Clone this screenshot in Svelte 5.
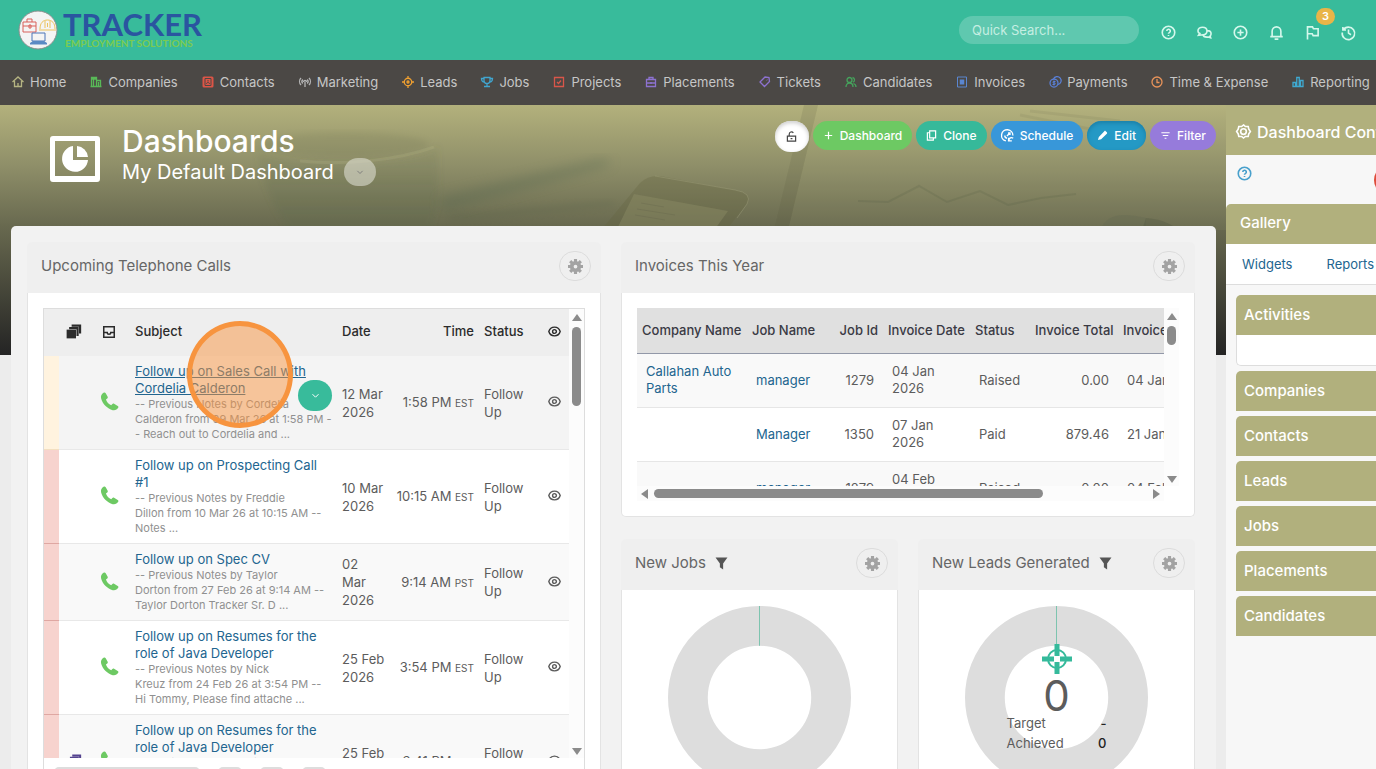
<script>
    const ring = (cx, cy, r) =>
        `M${cx - r} ${cy}a${r} ${r} 0 1 0 ${2 * r} 0a${r} ${r} 0 1 0 ${-2 * r} 0`;

    // 24x24 stroked icons
    const icons = {
        help: ring(12, 12, 10) + "M9.3 9.6a2.8 2.8 0 1 1 4 2.6c-.9.4-1.3.9-1.3 1.8M12 16v1.6",
        chat: "M4.500 13.500L2.500 16.500l4-.5c6 0 9.500-2.500 9.500-6.500 0-3.500-3-6-7-6s-7.500 2.500-7.500 6c0 1.600.8 3 3 4zM16.500 9c3.500 0 6 2 6 5 0 1.600-.6 2.700-1.500 3.600l.8 2.900-3.300-1.200c-5 .7-8.500-.8-9-4.300",
        plusCircle: ring(12, 12, 10) + "M12 7v10M7 12h10",
        bell: "M5 18v-8a7 7 0 0 1 14 0v8M2 18.500h20M9 22.500h6",
        flag: "M4 23V3h8l1.500 3H21v11h-8l-1.500-3H4",
        history: "M3 3v5h5M3.500 8A10 10 0 1 1 2 12M12 7v6l4 2.500",
        home: "M1 12L12 2l11 10M5 10v11h14V10M12 14v7",
        companies: "M1 21h22M3 21V3h10v18M13 9h8v12M7 6v15M17 12v9M3 6h10",
        marketing: "M12 12v10M9 12a3 3 0 1 1 6 0M4 4a10 10 0 0 0 0 14M20 4a10 10 0 0 1 0 14M7.500 7a6 6 0 0 0 0 8M16.500 7a6 6 0 0 1 0 8",
        leads: ring(12, 12, 7.5) + ring(12, 12, 2) + "M12 0v5M12 19v5M0 12h5M19 12h5",
        jobs: "M6 3h12v6a6 6 0 0 1-12 0zM6 5H1c0 5 2 7 6 7M18 5h5c0 5-2 7-6 7M12 15v5M6 21h12",
        projects: "M3 3h18v18H3zM8 12l3 3 5-6",
        placements: "M3 7h18v14H3zM8 7V3h8v4M3 14h18M12 12v4",
        tickets: "M12 2l8 1 1 8-10 10-9-9zM15.500 7.500l1 1",
        candidates: ring(9, 8, 5) + "M2 22c0-5 3-8 7-8s7 3 7 8M15 3a5 5 0 0 1 1 9.500M17 15c3 1 5 3 5 7",
        time: ring(12, 12, 10) + "M12 6v7h5",
        reporting: "M2 13h5v8H2zM9.500 3h5v18h-5zM17 9h5v12h-5zM1 21h22",
        unlock: "M3 11h18v11H3zM7 11V7a5 5 0 0 1 9-3M10 16.500h4",
        plus: "M12 4v16M4 12h16",
        clone: "M8 2h13v15H8zM8 6H3v16h13v-5",
        schedule: "M9 22A10.500 10.500 0 1 1 22 12M16 8l-5 5M13 7.500h3.500V11M7 12a5 5 0 0 0 4 5M14 16v6h6M14.500 21a5 5 0 0 1 8-4",
        filterLines: "M3 6h18M6 12h12M10 18h4",
        down: "M4 8.500l8 8 8-8",
        inbox: "M3 3h18v18H3zM3 13h6a3 3 0 0 0 6 0h6",
        eye: "M1.500 12C3 7 7 4 12 4s9 3 10.500 8c-1.500 5-5.500 8-10.500 8S3 17 1.500 12z" + ring(12, 12, 3.5),
        cog: "M12 1.500l3 2.500h4.500l1 4.200L23 12l-2.500 3.800-1 4.200H15l-3 2.500L9 20H4.500l-1-4.200L1 12l2.500-3.800 1-4.200H9z" + ring(12, 12, 4.5),
    };

    const topIcons = ["help", "chat", "plusCircle", "bell", "flag", "history"];

    const menu = [
        { label: "Home", icon: "home", color: "#b5b482" },
        { label: "Companies", icon: "companies", color: "#58b957" },
        { label: "Contacts", icon: "contacts", color: "#dc5547" },
        { label: "Marketing", icon: "marketing", color: "#b4b4b4" },
        { label: "Leads", icon: "leads", color: "#f0a030" },
        { label: "Jobs", icon: "jobs", color: "#41a5cf" },
        { label: "Projects", icon: "projects", color: "#d9564a" },
        { label: "Placements", icon: "placements", color: "#8d72d0" },
        { label: "Tickets", icon: "tickets", color: "#8d72d0" },
        { label: "Candidates", icon: "candidates", color: "#45a35c" },
        { label: "Invoices", icon: "invoices", color: "#5a86d0" },
        { label: "Payments", icon: "payments", color: "#5a80d8" },
        { label: "Time & Expense", icon: "time", color: "#e8935a" },
        { label: "Reporting", icon: "reporting", color: "#3fa9d0" },
    ];

    const heroActions = [
        { label: "Dashboard", icon: "plus", kind: "green" },
        { label: "Clone", icon: "clone", kind: "teal" },
        { label: "Schedule", icon: "schedule", kind: "blue" },
        { label: "Edit", icon: "pencil", kind: "edit" },
        { label: "Filter", icon: "filterLines", kind: "purple" },
    ];

    const calls = [
        {
            subject: ["Follow up on Sales Call with", "Cordelia Calderon"],
            notes: ["-- Previous Notes by Cordelia", "Calderon from 09 Mar 26 at 1:58 PM -", "- Reach out to Cordelia and ..."],
            date: ["12 Mar", "2026"],
            time: "1:58 PM",
            zone: "EST",
            active: true,
        },
        {
            subject: ["Follow up on Prospecting Call", "#1"],
            notes: ["-- Previous Notes by Freddie", "Dillon from 10 Mar 26 at 10:15 AM --", "Notes ..."],
            date: ["10 Mar", "2026"],
            time: "10:15 AM",
            zone: "EST",
        },
        {
            subject: ["Follow up on Spec CV"],
            notes: ["-- Previous Notes by Taylor", "Dorton from 27 Feb 26 at 9:14 AM --", "Taylor Dorton Tracker Sr. D ..."],
            date: ["02", "Mar", "2026"],
            time: "9:14 AM",
            zone: "PST",
        },
        {
            subject: ["Follow up on Resumes for the", "role of Java Developer"],
            notes: ["-- Previous Notes by Nick", "Kreuz from 24 Feb 26 at 3:54 PM --", "Hi Tommy, Please find attache ..."],
            date: ["25 Feb", "2026"],
            time: "3:54 PM",
            zone: "EST",
        },
        {
            subject: ["Follow up on Resumes for the", "role of Java Developer"],
            notes: ["-- Previous Notes by Nick", "Kreuz from 24 Feb 26 at 3:41 PM --", "Hi Tommy, Please find attache ..."],
            date: ["25 Feb", "2026"],
            time: "3:41 PM",
            zone: "EST",
            copies: true,
        },
    ];

    const invoices = [
        { company: "Callahan Auto Parts", job: "manager", id: 1279, date: ["04 Jan", "2026"], status: "Raised", total: "0.00", due: "04 Jan 2026" },
        { company: "", job: "Manager", id: 1350, date: ["07 Jan", "2026"], status: "Paid", total: "879.46", due: "21 Jan 2026" },
        { company: "", job: "manager", id: 1279, date: ["04 Feb", "2026"], status: "Raised", total: "0.00", due: "04 Feb 2026" },
    ];

    const gallery = ["Companies", "Contacts", "Leads", "Jobs", "Placements", "Candidates"];

    let search = $state("");
</script>

{#snippet icon(name, size = 14)}
    <svg class="icon" width={size} height={size} viewBox="0 0 24 24" aria-hidden="true">
        {#if name === "contacts"}
            <rect x="1" y="1" width="22" height="22" rx="3" fill="currentColor" />
            <path d="M6 5h12v14H6zM12 8v3M9 16c0-4 6-4 6 0" fill="none" stroke="#4a4845" stroke-width="2" />
        {:else if name === "invoices"}
            <path d="M3 2h18v20H3z" fill="none" stroke="currentColor" stroke-width="2" />
            <path d="M7.500 7h9v10h-9z" fill="currentColor" />
        {:else if name === "payments"}
            <path d="M9 6a8 8 0 1 1 9 11" fill="none" stroke="currentColor" stroke-width="2.500" />
            <circle cx="10" cy="14" r="8" fill="none" stroke="currentColor" stroke-width="2.500" />
            <path d="M13 11H9.500a1.500 1.500 0 0 0 0 3h1.500a1.500 1.500 0 0 1 0 3H7M10 9v10" fill="none" stroke="currentColor" stroke-width="2" />
        {:else if name === "pencil"}
            <path d="M2 22l2-7L16 2.500c1-1 2-1 3 0L21.500 5c1 1 1 2 0 3L9 20z" fill="currentColor" />
        {:else if name === "gear"}
            <circle cx="12" cy="12" r="6" fill="none" stroke="currentColor" stroke-width="6" />
            <path d="M12 0v6M12 18v6M0 12h6M18 12h6M3.500 3.500L8 8M16 16l4.500 4.500M3.500 20.500L8 16M16 8l4.500-4.500" stroke="currentColor" stroke-width="5" />
        {:else if name === "phone"}
            <path d="M4.500 1C2 2.500.500 5 1.500 8.500c2 7 8 12.500 14.500 14.500 3 .7 5.500-.5 7-3 .5-1 .2-1.800-.6-2.300l-4.600-2.900c-.8-.5-1.600-.3-2.200.4l-1.400 1.500C11 15.500 8.500 12.500 7.500 9.500l1.700-1.200c.7-.6.900-1.300.5-2.200L7.200 1.600C6.700.7 5.500.4 4.500 1z" fill="currentColor" />
        {:else if name === "copies"}
            <path d="M1 9h15v14H1z" fill="currentColor" />
            <path d="M5 6.500h13.500V19M9 2.500h13.500V15" fill="none" stroke="currentColor" stroke-width="3.500" />
        {:else if name === "funnel"}
            <path d="M1 1h22l-8 11v11l-6-4v-7z" fill="currentColor" />
        {:else}
            <path d={icons[name]} fill="none" stroke="currentColor" stroke-width="2.600" />
        {/if}
    </svg>
{/snippet}

{#snippet cardHead(title, filtered = false)}
    <div class="card-head">
        <h2>{title}</h2>
        {#if filtered}
            <span class="funnel">{@render icon("funnel", 13)}</span>
        {/if}
        <button class="gear" type="button" aria-label="{title} settings">
            {@render icon("gear", 15)}
        </button>
    </div>
{/snippet}

{#snippet donut()}
    <svg class="donut" viewBox="0 0 184 184" aria-hidden="true">
        <circle cx="92" cy="92" r="72" fill="none" stroke="#ddd" stroke-width="40" />
        <path d="M92 0v40" stroke="#7cc4ae" />
    </svg>
{/snippet}

<div class="page">
    <header class="topbar">
        <a class="logo" href="#home" aria-label="Tracker Employment Solutions">
            <svg width="40" height="40" viewBox="0 0 40 40" aria-hidden="true">
                <circle cx="20" cy="20" r="19" fill="#f4f4f4" stroke="#8a8f8d" />
                <g fill="none" stroke-width="1">
                    <path d="M5 12h13v10H5zM5 16h13M9 12V9h5v3M11 15h2v3h-2z" stroke="#d9605a" />
                    <path d="M21 20h17M22 19c0-6 3-9 7.500-9s7.500 3 7.500 9M27 18v-7M32 18v-7M29.500 17v-4" stroke="#ecc25c" />
                    <path d="M14 23h13v8H14z" stroke="#4a74b8" />
                </g>
                <path d="M12 33l3-2h11l3 2v1.500H12z" fill="#5c8ac4" />
            </svg>
            <span class="wordmark">
                <span class="brand">TRACKER</span>
                <span class="tagline">EMPLOYMENT SOLUTIONS</span>
            </span>
        </a>
        <input class="search" type="text" placeholder="Quick Search..." aria-label="Quick Search" bind:value={search} />
        <div class="top-icons">
            {#each topIcons as name}
                <button type="button" aria-label={name}>
                    {@render icon(name, 15)}
                    {#if name === "flag"}
                        <span class="badge">3</span>
                    {/if}
                </button>
            {/each}
        </div>
    </header>

    <nav class="menu">
        {#each menu as item}
            <a href="#{item.icon}">
                <span class="menu-icon" style="color: {item.color}">{@render icon(item.icon, 12)}</span>
                {item.label}
            </a>
        {/each}
    </nav>

    <div class="workspace">
        <main>
            <!-- desk scene behind the heading -->
            <svg class="scene" viewBox="0 0 1226 250" preserveAspectRatio="xMidYMin slice" aria-hidden="true">
                <defs>
                    <filter id="soft"><feGaussianBlur stdDeviation="3" /></filter>
                    <filter id="blurry"><feGaussianBlur stdDeviation="6" /></filter>
                    <linearGradient id="cup" x1="0" y1="0" x2="0" y2="1">
                        <stop offset="0" stop-color="#5f6b4c" stop-opacity="0.1" />
                        <stop offset="1" stop-color="#5f6b4c" stop-opacity="0.3" />
                    </linearGradient>
                </defs>
                <path d="M257 44c10 20 170 20 181-4v60l-8 25H290c-18-20-28-50-33-81z" fill="url(#cup)" filter="url(#soft)" />
                <ellipse cx="345" cy="40" rx="84" ry="13" fill="#626748" opacity="0.15" filter="url(#soft)" />
                <path d="M300 56c50 5 100-2 134-14" fill="none" stroke="#c6c69a" stroke-width="3" opacity="0.15" />
                <path d="M440 92L600 54l14 3-12 6-160 44z" fill="#55664f" opacity="0.35" filter="url(#blurry)" />
                <path d="M450 110l160-14 6 5-166 16z" fill="#55604a" opacity="0.2" filter="url(#soft)" />
                <path d="M602 124l38-46q8-8 20-7l75 14q18 3 12 14l-20 25z" fill="#62623f" opacity="0.3" />
                <path d="M655 71l80 14q18 3 12 14l-10 14" fill="none" stroke="#b0b08a" opacity="0.3" />
                <path d="M617 124l17-35 94 17-13 18z" fill="#94946c" opacity="0.35" />
                <path d="M641 98l23 4M637 104l38 6M635 110l30 5" stroke="#62624a" opacity="0.3" />
                <path d="M818 0h408v125H788z" fill="#b9ba8e" opacity="0.08" />
                <path d="M804 0h14l-30 125h-14z" fill="#54563c" opacity="0.15" />
                <path d="M1020 10l80 16M1030 6l90 10" stroke="#5e6044" stroke-width="3" opacity="0.1" />
                <g fill="none" stroke="#4c5540" opacity="0.16">
                    <path d="M858 96l30 1 31-16 28 16 33-11 28 14 33-7 35-4" stroke-width="2" />
                </g>
                <path d="M1100 125c6-16 22-18 46-12v12z" fill="#59624e" opacity="0.2" />
                <path d="M1146 113c18 1 28 8 32 12h-36z" fill="#3e4739" opacity="0.2" />
            </svg>

            <section class="hero">
                <svg class="hero-icon" width="52" height="48" viewBox="0 0 52 48" aria-hidden="true">
                    <path d="M4 1h44a3 3 0 0 1 3 3v40a3 3 0 0 1-3 3H4a3 3 0 0 1-3-3V4a3 3 0 0 1 3-3zm2 5v35h40V6z" fill="#fff" fill-rule="evenodd" />
                    <path d="M24 11v14h15a13 13 0 1 1-15-14z" fill="#fff" />
                    <path d="M28 11a12 12 0 0 1 11 11H28z" fill="#fff" />
                </svg>
                <div class="heading">
                    <h1>Dashboards</h1>
                    <div class="subtitle">
                        My Default Dashboard
                        <button type="button" aria-label="Switch dashboard">{@render icon("down", 8)}</button>
                    </div>
                </div>
                <div class="actions">
                    <button class="lock" type="button" aria-label="Unlock">{@render icon("unlock", 11)}</button>
                    {#each heroActions as action}
                        <button class={action.kind} type="button">
                            {@render icon(action.icon, action.icon === "schedule" ? 13 : 11)}
                            {action.label}
                        </button>
                    {/each}
                </div>
            </section>

            <section class="board">
                <article class="card calls">
                    {@render cardHead("Upcoming Telephone Calls")}
                    <div class="card-body">
                        <div class="frame">
                            <div class="calls-view">
                                <table>
                                    <colgroup>
                                        <col class="c-strip" /><col class="c-copy" /><col class="c-type" /><col />
                                        <col class="c-date" /><col class="c-time" /><col class="c-status" /><col class="c-eye" />
                                    </colgroup>
                                    <thead>
                                        <tr>
                                            <th></th>
                                            <th class="mid">{@render icon("copies", 15)}</th>
                                            <th class="mid">{@render icon("inbox", 14)}</th>
                                            <th>Subject</th>
                                            <th>Date</th>
                                            <th class="num">Time</th>
                                            <th>Status</th>
                                            <th class="mid">{@render icon("eye", 13)}</th>
                                        </tr>
                                    </thead>
                                    <tbody>
                                        {#each calls as call}
                                            <tr class:active={call.active}>
                                                <td class="strip"></td>
                                                <td class="mid copies">
                                                    {#if call.copies}{@render icon("copies", 14)}{/if}
                                                </td>
                                                <td class="mid phone">{@render icon("phone", 19)}</td>
                                                <td>
                                                    <div class="subject">
                                                        <a href="#call">
                                                            {#each call.subject as line}<span>{line}</span>{/each}
                                                        </a>
                                                        <div class="notes">
                                                            {#each call.notes as line}<span>{line}</span>{/each}
                                                        </div>
                                                        {#if call.active}
                                                            <button class="row-menu" type="button" aria-label="Row actions">
                                                                {@render icon("down", 9)}
                                                            </button>
                                                        {/if}
                                                    </div>
                                                </td>
                                                <td class="lines">{#each call.date as line}<span>{line}</span>{/each}</td>
                                                <td class="num">{call.time} <small>{call.zone}</small></td>
                                                <td class="lines"><span>Follow</span><span>Up</span></td>
                                                <td class="mid">{@render icon("eye", 13)}</td>
                                            </tr>
                                        {/each}
                                    </tbody>
                                </table>
                                <div class="scroll-y">
                                    <i class="arrow up"></i>
                                    <i class="thumb long"></i>
                                    <i class="arrow dn"></i>
                                </div>
                            </div>
                            <div class="pager"><i class="wide"></i><i></i><i></i><i></i></div>
                        </div>
                    </div>
                </article>

                <div class="stack">
                    <article class="card">
                        {@render cardHead("Invoices This Year")}
                        <div class="card-body">
                            <div class="invoice-grid">
                                <div class="invoice-view">
                                    <table>
                                        <colgroup>
                                            <col class="i-company" /><col class="i-job" /><col class="i-id" /><col class="i-date" />
                                            <col class="i-status" /><col class="i-total" /><col class="i-company" />
                                        </colgroup>
                                        <thead>
                                            <tr>
                                                <th>Company Name</th>
                                                <th>Job Name</th>
                                                <th class="num">Job Id</th>
                                                <th>Invoice Date</th>
                                                <th>Status</th>
                                                <th class="num">Invoice Total</th>
                                                <th>Invoice Due</th>
                                            </tr>
                                        </thead>
                                        <tbody>
                                            {#each invoices as invoice}
                                                <tr>
                                                    <td><a href="#company">{invoice.company}</a></td>
                                                    <td><a href="#job">{invoice.job}</a></td>
                                                    <td class="num">{invoice.id}</td>
                                                    <td class="lines">{#each invoice.date as line}<span>{line}</span>{/each}</td>
                                                    <td>{invoice.status}</td>
                                                    <td class="num">{invoice.total}</td>
                                                    <td class="nowrap">{invoice.due}</td>
                                                </tr>
                                            {/each}
                                        </tbody>
                                    </table>
                                </div>
                                <div class="scroll-y">
                                    <i class="arrow up"></i>
                                    <i class="thumb short"></i>
                                    <i class="arrow dn"></i>
                                </div>
                                <div class="scroll-x">
                                    <i class="arrow lt"></i>
                                    <span class="track"><i class="thumb"></i></span>
                                    <i class="arrow rt"></i>
                                </div>
                            </div>
                        </div>
                    </article>

                    <div class="pair">
                        <article class="card">
                            {@render cardHead("New Jobs", true)}
                            <div class="card-body chart">
                                {@render donut()}
                            </div>
                        </article>
                        <article class="card">
                            {@render cardHead("New Leads Generated", true)}
                            <div class="card-body chart">
                                {@render donut()}
                                <div class="gauge">
                                    <svg width="30" height="30" viewBox="0 0 30 30" aria-hidden="true">
                                        <circle cx="15" cy="15" r="9" fill="none" stroke="#35ba9b" stroke-width="2" />
                                        <path d="M15 0v12M15 18v12M0 15h12M18 15h12" stroke="#35ba9b" stroke-width="5" />
                                    </svg>
                                    <strong>0</strong>
                                    <dl>
                                        <dt>Target</dt><dd>-</dd>
                                        <dt>Achieved</dt><dd>0</dd>
                                    </dl>
                                </div>
                            </div>
                        </article>
                    </div>
                </div>
            </section>

            <div class="pointer"></div>
        </main>

        <aside>
            <div class="side-title">{@render icon("cog", 15)} Dashboard Controls</div>
            <div class="side-tools">
                <button class="side-help" type="button" aria-label="Help">{@render icon("help", 15)}</button>
                <button class="side-close" type="button" aria-label="Close"></button>
            </div>
            <h3 class="side-head">Gallery</h3>
            <div class="tabs">
                <a href="#widgets">Widgets</a>
                <a href="#reports">Reports</a>
            </div>
            <div class="sections">
                <div>
                    <button class="section" type="button">Activities</button>
                    <div class="section-body"></div>
                </div>
                {#each gallery as name}
                    <button class="section" type="button">{name}</button>
                {/each}
            </div>
        </aside>
    </div>
</div>

<style>
    :global(body) {
        margin: 0;
        font-family: Inter, "Liberation Sans", sans-serif;
        font-size: 13px;
        color: #5c5c5c;
    }

    .page {
        display: flex;
        flex-direction: column;
        height: 100vh;
        overflow: hidden;
    }

    .page :global(*) {
        box-sizing: border-box;
    }

    button {
        display: flex;
        align-items: center;
        justify-content: center;
        padding: 0;
        border: 0;
        background: none;
        font: inherit;
        color: inherit;
        cursor: pointer;
    }

    a {
        color: #22658f;
        text-decoration: none;
    }

    h1,
    h2,
    h3,
    dl,
    dd {
        margin: 0;
        font-weight: 400;
    }

    .icon {
        display: block;
        flex: none;
        overflow: visible;
    }

    .topbar {
        display: flex;
        align-items: center;
        flex: none;
        height: 60px;
        padding: 0 10px 0 18px;
        background: #38bb9b;
    }

    .logo {
        display: flex;
        align-items: center;
        gap: 5px;
        margin-right: auto;
    }

    .wordmark {
        display: flex;
        flex-direction: column;
        padding-bottom: 2px;
        font-family: Lato, sans-serif;
    }

    .brand {
        font-size: 31px;
        line-height: 28px;
        font-weight: 700;
        color: #2a55a0;
    }

    .tagline {
        padding-left: 2px;
        font-size: 10px;
        line-height: 10px;
        font-weight: 700;
        color: #7ccb50;
    }

    .search {
        width: 180px;
        height: 28px;
        margin-right: 11px;
        padding: 0 13px;
        border: 0;
        border-radius: 14px;
        background: rgba(255, 255, 255, 0.2);
        font: inherit;
        color: #fff;
    }

    .search::placeholder {
        color: #c5eee2;
    }

    .top-icons {
        display: flex;
        padding-top: 4px;
        color: #d5f8ec;
    }

    .top-icons button {
        position: relative;
        width: 36px;
        height: 28px;
    }

    .badge {
        position: absolute;
        top: -10px;
        right: -5px;
        width: 19px;
        height: 17px;
        border-radius: 9px;
        background: #e9b548;
        font-size: 11px;
        line-height: 17px;
        font-weight: 600;
        color: #fff;
    }

    .menu {
        display: flex;
        align-items: center;
        justify-content: space-between;
        flex: none;
        height: 45px;
        padding: 0 6px 2px 12px;
        background: #4b4845;
    }

    .menu a {
        display: flex;
        align-items: center;
        gap: 6px;
        color: #c6c6c6;
        white-space: nowrap;
    }

    .workspace {
        display: flex;
        flex: 1;
        min-height: 0;
    }

    main {
        position: relative;
        display: flex;
        flex-direction: column;
        flex: 1;
        min-width: 0;
        padding: 0 10px 0 11px;
        overflow: hidden;
        background: linear-gradient(#b3b17c, #8f8f69 60px, #68694f 121px, #242424 250px) no-repeat top / 100% 250px #ececec;
    }

    .scene {
        position: absolute;
        top: 0;
        left: 0;
        width: 100%;
        height: 250px;
    }

    .hero {
        position: relative;
        display: flex;
        flex: none;
        height: 121px;
        padding-left: 38px;
        color: #fff;
    }

    .hero-icon {
        margin: 30px 21px 0 0;
    }

    h1 {
        margin-top: 19px;
        font-size: 30px;
        line-height: 34px;
        font-weight: 500;
    }

    .subtitle {
        display: flex;
        align-items: center;
        gap: 10px;
        font-size: 20px;
        line-height: 28px;
    }

    .subtitle button {
        width: 32px;
        height: 28px;
        border-radius: 14px;
        background: rgba(230, 230, 220, 0.55);
        color: #777;
    }

    .actions {
        display: flex;
        align-items: flex-start;
        gap: 4px;
        margin: 16px 0 0 auto;
    }

    .actions button {
        gap: 6px;
        height: 29px;
        padding: 0 10px 1px;
        border-radius: 15px;
        font-size: 12px;
        font-weight: 500;
    }

    .actions .lock {
        width: 34px;
        height: 31px;
        padding: 0;
        border-radius: 16px;
        background: #fff;
        box-shadow: inset 0 2px 4px #ccc;
        color: #444;
    }

    .actions .green {
        background: #6dc963;
    }

    .actions .teal {
        background: #36b99a;
    }

    .actions .blue {
        background: #3897d9;
    }

    .actions .edit {
        background: #2499c5;
        box-shadow: inset 0 2px 4px #1b7fa6;
    }

    .actions .purple {
        background: #967bdb;
    }

    .board {
        position: relative;
        display: grid;
        grid-template-columns: minmax(0, 1fr) minmax(0, 1fr);
        gap: 20px;
        flex: 1 0 auto;
        padding: 16px 21px 0 16px;
        border-radius: 5px 5px 0 0;
        background: #f2f2f2;
    }

    .card-head {
        display: flex;
        align-items: center;
        height: 51px;
        padding: 0 10px 3px 14px;
        border-radius: 5px 5px 0 0;
        background: #efefef;
    }

    h2 {
        font-size: 15px;
        line-height: 20px;
        color: #666;
    }

    .funnel {
        margin-left: 9px;
        color: #555;
    }

    .gear {
        width: 32px;
        height: 30px;
        margin-left: auto;
        border: 1px solid #dcdcdc;
        border-radius: 16px;
        color: #a3a3a3;
    }

    .card-body {
        padding: 15px;
        border: 1px solid #e3e3e3;
        border-top: 0;
        border-radius: 0 0 5px 5px;
        background: #fff;
    }

    table {
        width: 100%;
        border-collapse: collapse;
        table-layout: fixed;
    }

    th {
        padding: 0 5px 1px;
        font-weight: 500;
        text-align: left;
        white-space: nowrap;
        color: #2b2b2b;
    }

    .num {
        text-align: right;
        white-space: nowrap;
    }

    .nowrap {
        white-space: nowrap;
    }

    .mid .icon {
        margin: 0 auto;
    }

    .lines span,
    .subject span {
        display: block;
        white-space: nowrap;
    }

    .frame {
        border: 1px solid #ddd;
    }

    .calls-view {
        display: flex;
        height: 449px;
        overflow: hidden;
    }

    .calls-view th {
        height: 47px;
        padding-bottom: 3px;
        background: #eee;
    }

    .calls-view td {
        padding: 7px 5px;
        border-bottom: 1px solid #e8e8e8;
        line-height: 18px;
    }

    .calls-view .mid {
        padding: 0 0 2px;
    }

    .c-strip {
        width: 15px;
    }

    .c-copy {
        width: 29px;
    }

    .c-type {
        width: 42px;
    }

    .c-date {
        width: 52px;
    }

    .c-time {
        width: 90px;
    }

    .c-status {
        width: 60px;
    }

    .c-eye {
        width: 30px;
    }

    tbody tr:nth-child(odd) {
        background: #f9f9f9;
    }

    tbody tr.active {
        background: #f4f4f4;
    }

    .calls-view .strip {
        border-bottom-color: #dfa7a2;
        background: #f7d3ce;
    }

    .calls-view .active .strip {
        border-bottom-color: #f3dfc0;
        background: #fff3df;
    }

    .copies {
        color: #54438f;
    }

    .phone {
        color: #6dc963;
    }

    .subject {
        position: relative;
        line-height: 17px;
    }

    .active .subject a {
        text-decoration: underline;
    }

    .notes {
        font-size: 11px;
        line-height: 15px;
        color: #909090;
    }

    .row-menu {
        position: absolute;
        right: 0;
        top: 17px;
        width: 34px;
        height: 31px;
        border-radius: 16px;
        background: #38bb9b;
        color: #fff;
    }

    small {
        font-size: 10px;
    }

    .scroll-y {
        display: flex;
        flex-direction: column;
        align-items: center;
        flex: none;
        width: 15px;
        padding: 5px 0 3px;
        background: #fcfcfc;
    }

    .arrow {
        border: 5px solid transparent;
    }

    .up {
        border-top: 0;
        border-bottom: 7px solid #8b8b8b;
    }

    .dn {
        margin-top: auto;
        border-bottom: 0;
        border-top: 7px solid #8b8b8b;
    }

    .lt {
        border-left: 0;
        border-right: 7px solid #8b8b8b;
    }

    .rt {
        border-right: 0;
        border-left: 7px solid #8b8b8b;
    }

    .thumb {
        width: 9px;
        border-radius: 5px;
        background: #8b8b8b;
    }

    .long {
        height: 79px;
        margin-top: 6px;
    }

    .short {
        height: 19px;
        margin-top: 6px;
    }

    .pager {
        display: flex;
        gap: 18px;
        padding: 9px 10px;
    }

    .pager i {
        width: 24px;
        height: 26px;
        border-radius: 5px;
        background: #ddd;
    }

    .pager .wide {
        width: 146px;
    }

    .stack {
        display: flex;
        flex-direction: column;
        gap: 22px;
    }

    .invoice-grid {
        display: grid;
        grid-template-columns: minmax(0, 1fr) 15px;
        grid-template-rows: 178px 15px;
    }

    .invoice-view {
        overflow: hidden;
    }

    .invoice-view table {
        width: 591px;
    }

    .invoice-view th {
        height: 45px;
        border-bottom: 1px solid #9298a8;
        background: #e0e0e0;
        color: #3a3a44;
    }

    .invoice-view td {
        height: 54px;
        padding: 0 9px;
        border-bottom: 1px solid #e6e6e6;
        line-height: 17px;
    }

    .i-company {
        width: 110px;
    }

    .i-job {
        width: 83px;
    }

    .i-id {
        width: 53px;
    }

    .i-date {
        width: 87px;
    }

    .i-status {
        width: 60px;
    }

    .i-total {
        width: 88px;
    }

    .scroll-x {
        display: flex;
        align-items: center;
        gap: 6px;
        padding: 0 4px;
        background: #fcfcfc;
    }

    .track {
        flex: 1;
    }

    .track .thumb {
        display: block;
        width: 79%;
        height: 9px;
    }

    .pair {
        display: grid;
        grid-template-columns: 1fr 1fr;
        gap: 20px;
    }

    .chart {
        position: relative;
        padding: 16px;
    }

    .donut {
        display: block;
        width: 183px;
        margin: 0 auto;
    }

    .gauge {
        position: absolute;
        top: 54px;
        left: 0;
        right: 0;
        display: flex;
        flex-direction: column;
        align-items: center;
    }

    .gauge strong {
        margin-top: 4px;
        font-size: 42px;
        line-height: 35px;
        font-weight: 400;
    }

    dl {
        display: grid;
        grid-template-columns: 1fr auto;
        width: 100px;
        line-height: 20px;
    }

    dd {
        font-weight: 500;
        text-align: right;
        color: #222;
    }

    .pointer {
        position: absolute;
        left: 187px;
        top: 216px;
        width: 106px;
        height: 107px;
        border: 5px solid #f7943f;
        border-radius: 50%;
        background: rgba(247, 148, 63, 0.5);
    }

    aside {
        display: flex;
        flex-direction: column;
        flex: none;
        width: 150px;
        overflow: hidden;
        background: #f7f7f7;
        white-space: nowrap;
    }

    .side-title {
        display: flex;
        align-items: center;
        flex: none;
        gap: 6px;
        height: 50px;
        padding: 3px 0 0 10px;
        background: #b1b07d;
        font-size: 16px;
        font-weight: 500;
        color: #fff;
    }

    .side-tools {
        position: relative;
        flex: none;
        height: 49px;
        padding: 11px;
    }

    .side-help {
        color: #48a0cc;
    }

    .side-close {
        position: absolute;
        top: 10px;
        right: -28px;
        width: 30px;
        height: 30px;
        border-radius: 50%;
        background: #dd4b39;
    }

    .side-head {
        flex: none;
        height: 40px;
        padding-left: 14px;
        border-radius: 5px 0 0;
        background: #b1b07d;
        font-size: 15px;
        line-height: 38px;
        font-weight: 500;
        color: #fff;
    }

    .tabs {
        display: flex;
        flex: none;
        gap: 34px;
        height: 41px;
        padding-left: 16px;
        border-bottom: 1px solid #ddd;
        background: #fff;
        line-height: 40px;
    }

    .sections {
        display: flex;
        flex-direction: column;
        gap: 5px;
        padding: 10px 0 0 10px;
    }

    .section {
        justify-content: flex-start;
        width: 100%;
        height: 40px;
        padding: 0 8px 2px;
        border-radius: 5px 0 0;
        background: #b1b07d;
        font-size: 15px;
        font-weight: 500;
        color: #fff;
    }

    .section-body {
        height: 31px;
        border: 1px solid #ddd;
        border-width: 0 0 1px 1px;
        border-radius: 0 0 0 5px;
        background: #fff;
    }
</style>
